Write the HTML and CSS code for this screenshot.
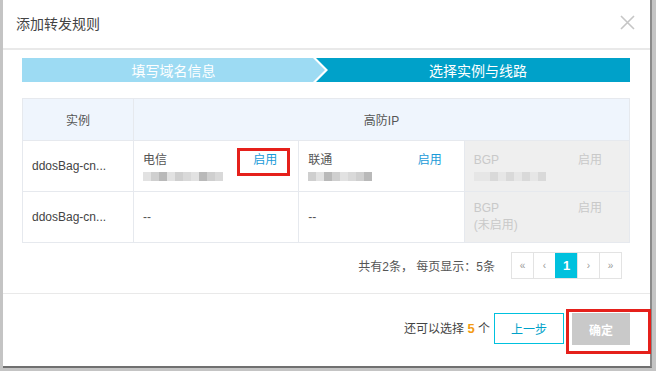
FILE: index.html
```html
<!DOCTYPE html>
<html>
  <head>
    <title>添加转发规则</title>
    <link rel="stylesheet" href="styles.css">
  </head>
  <body>
    <div class="dialog">
      <div class="dialog-header">
        <span class="dialog-title">添加转发规则</span>
        <svg class="dialog-close" width="15" height="15" viewBox="0 0 15 15">
          <path d="M1 1L14 14M14 1L1 14" stroke="#c6c6c6" stroke-width="1.6" fill="none"/>
        </svg>
      </div>
      <div class="dialog-body">
        <div class="steps">
          <div class="step step-done">填写域名信息</div>
          <div class="step step-active">选择实例与线路</div>
        </div>
        <table class="grid">
          <tr class="grid-head">
            <th class="col-inst">实例</th>
            <th colspan="3">高防IP</th>
          </tr>
          <tr>
            <td class="col-inst">ddosBag-cn...</td>
            <td>
              <div class="line">
                <div>
                  <div>电信</div>
                  <div class="ip"><i class="b1"></i><i class="b2"></i><i class="b3"></i><i class="b1"></i><i class="b2"></i><i class="b4"></i><i class="b1"></i><i class="b3"></i><i class="b2"></i><i class="b4"></i></div>
                </div>
                <a class="enable marked">启用</a>
              </div>
            </td>
            <td>
              <div class="line">
                <div>
                  <div>联通</div>
                  <div class="ip"><i class="b2"></i><i class="b1"></i><i class="b3"></i><i class="b2"></i><i class="b1"></i><i class="b4"></i><i class="b2"></i><i class="b3"></i></div>
                </div>
                <a class="enable">启用</a>
              </div>
            </td>
            <td class="off">
              <div class="line">
                <div>
                  <div>BGP</div>
                  <div class="ip light"><i class="b1"></i><i class="b1"></i><i class="b2"></i><i class="b1"></i><i class="b2"></i><i class="b1"></i><i class="b2"></i><i class="b1"></i><i class="b2"></i></div>
                </div>
                <a class="enable">启用</a>
              </div>
            </td>
          </tr>
          <tr>
            <td class="col-inst">ddosBag-cn...</td>
            <td>--</td>
            <td>--</td>
            <td class="off">
              <div class="line">
                <div>
                  <div>BGP</div>
                  <div>(未启用)</div>
                </div>
                <a class="enable">启用</a>
              </div>
            </td>
          </tr>
        </table>
        <div class="pager-row">
          <span class="pager-info">共有2条， 每页显示：5条</span>
          <div class="pager">
            <span>&laquo;</span>
            <span>&lsaquo;</span>
            <span class="current">1</span>
            <span>&rsaquo;</span>
            <span>&raquo;</span>
          </div>
        </div>
      </div>
      <div class="dialog-footer">
        <span class="remain">还可以选择 <b>5</b> 个</span>
        <button class="btn btn-prev">上一步</button>
        <div class="mark-box">
          <button class="btn btn-ok">确定</button>
        </div>
      </div>
    </div>
  </body>
</html>
```

FILE: styles.css
```css
body {
  margin: 0;
  padding: 0;
  background: #c4c4c4;
  font-family: "Liberation Sans", "Noto Sans CJK SC", sans-serif;
  font-size: 12px;
  color: #555;
}
.dialog {
  margin-left: 3px;
  width: 647px;
  height: 366px;
  background: #fff;
  border-right: 2px solid #8a8a8a;
  border-bottom: 2px solid #707070;
  display: flex;
  flex-direction: column;
}
.dialog-header {
  height: 48px;
  border-bottom: 2px solid #e9e9e9;
  display: flex;
  align-items: center;
  justify-content: space-between;
  padding: 0 15px 0 13px;
}
.dialog-title {
  font-size: 14px;
  color: #444;
  margin-top: -2px;
}
.dialog-close {
  margin-top: -3px;
}
.dialog-body {
  padding: 8px 18px 0 15px;
  height: 235px;
  border-bottom: 1px solid #e9e9e9;
}
.steps {
  display: flex;
  height: 24px;
  width: 608px;
  margin-left: 4px;
}
.step {
  display: flex;
  align-items: center;
  justify-content: center;
  color: #fff;
  font-size: 14px;
}
.step-done {
  width: 303px;
  flex-shrink: 0;
  background: #9ddbf3;
  clip-path: polygon(0 0, 291px 0, 303px 50%, 291px 100%, 0 100%);
  margin-right: -9px;
  position: relative;
  z-index: 1;
}
.step-active {
  flex: 1;
  background: #00a1c9;
  clip-path: polygon(0 0, 100% 0, 100% 100%, 0 100%, 12px 50%);
  padding-left: 10px;
}
.grid {
  margin-top: 16px;
  margin-left: 4px;
  width: 608px;
  border-collapse: collapse;
  table-layout: fixed;
}
.grid th, .grid td {
  border: 1px solid #e6e9ee;
  text-align: left;
  vertical-align: middle;
  padding: 0 9px;
  font-weight: normal;
  height: 50px;
  color: #555;
}
.grid-head th {
  background: #eff5fd;
  text-align: center;
  height: 41px;
}
.grid th.col-inst {
  width: 92px;
}
.grid td.col-inst {
  color: #444;
}
.line {
  display: flex;
  justify-content: space-between;
  align-items: flex-start;
  line-height: 17px;
}
.enable {
  color: #1a9ad8;
  padding-right: 13px;
}
.grid td.off {
  background: #efefef;
  color: #c9c9c9;
}
.off .enable {
  color: #c9c9c9;
  padding-right: 18px;
}
.enable.marked {
  border: 3px solid #e5201b;
  padding: 1px 10px 4px 13px;
  margin: -4px -1px -6px 0;
  line-height: 17px;
}
.ip {
  display: flex;
  height: 9px;
  margin-top: 3px;
}
.ip i {
  display: block;
  width: 8px;
  height: 9px;
}
.ip .b1 { background: #e2e2e2; }
.ip .b2 { background: #cfcfcf; }
.ip .b3 { background: #b9b9b9; }
.ip .b4 { background: #d9d9d9; }
.ip.light .b1 { background: #e6e6e6; }
.ip.light .b2 { background: #d9d9d9; }
.pager-row {
  display: flex;
  justify-content: flex-end;
  align-items: center;
  margin-top: 9px;
  padding-right: 10px;
}
.pager-info {
  color: #555;
  margin-right: 16px;
}
.pager {
  display: flex;
  border: 1px solid #e3e3e3;
}
.pager span {
  width: 21px;
  height: 25px;
  display: flex;
  align-items: center;
  justify-content: center;
  border-left: 1px solid #e3e3e3;
  color: #999;
  font-size: 10px;
}
.pager span:first-child {
  border-left: none;
}
.pager .current {
  background: #00c1de;
  color: #fff;
  font-size: 13px;
  font-weight: bold;
  border-left-color: #00c1de;
}
.dialog-footer {
  flex: 1;
  display: flex;
  justify-content: flex-end;
  align-items: flex-start;
}
.remain {
  color: #444;
  margin: 25px 4px 0 0;
}
.remain b {
  color: #f39c12;
  font-size: 13px;
}
.btn {
  font-family: "Liberation Sans", "Noto Sans CJK SC", sans-serif;
  font-size: 12px;
  height: 31px;
  cursor: pointer;
}
.btn-prev {
  width: 70px;
  border: 1px solid #00c1de;
  background: #fff;
  color: #00a1c9;
  margin-top: 19px;
}
.mark-box {
  border: 3px solid #e5201b;
  padding: 1px 18px 6px 3px;
  margin: 15px -1px 0 2px;
}
.btn-ok {
  width: 58px;
  height: 32px;
  border: none;
  background: #c9c9c9;
  color: #fff;
  font-weight: bold;
}
```
